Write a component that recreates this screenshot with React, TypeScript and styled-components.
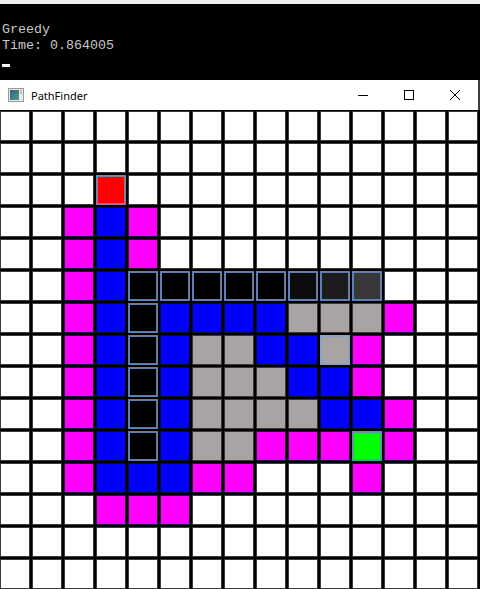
import React from "react";
import styled, { createGlobalStyle } from "styled-components";

const Global = createGlobalStyle`
  html, body { margin: 0; padding: 0; background: #000; overflow: hidden; }
  #root { width: 480px; height: 589px; }
`;

const Page = styled.div`
  width: 480px;
  height: 589px;
  display: flex;
  flex-direction: column;
  overflow: hidden;
  background: #000;
`;

const TopStrip = styled.div`
  height: 4px;
  background: #f0f0f0;
  flex: none;
`;

const Console = styled.div`
  height: 76px;
  flex: none;
  background: #000;
  padding: 18px 0 0 2px;
  box-sizing: border-box;
  font-family: "Liberation Mono", "DejaVu Sans Mono", monospace;
  font-size: 13.33px;
  line-height: 16px;
  color: #c8c8c8;
`;

const Line = styled.div`
  white-space: pre;
  height: 16px;
`;

const Cursor = styled.div`
  width: 8px;
  height: 3px;
  background: #f2f2f2;
  margin-top: 10px;
`;

const TitleBar = styled.div`
  height: 30px;
  flex: none;
  background: #ffffff;
  display: flex;
  align-items: center;
  box-sizing: border-box;
  padding-left: 8px;
  border-right: 2px solid #3c3c3c;
`;

const Title = styled.span`
  font-family: "Noto Sans", "Open Sans", sans-serif;
  font-size: 11px;
  color: #000;
  margin-left: 7px;
  flex: 1;
`;

const CaptionButton = styled.div`
  width: 46px;
  height: 30px;
  display: flex;
  align-items: center;
  justify-content: center;
`;

const GridArea = styled.div`
  flex: 1;
  background: #000;
  overflow: hidden;
  padding-top: 1px;
`;

const Grid = styled.div`
  display: grid;
  grid-template-columns: repeat(15, 30px);
  grid-auto-rows: 30px;
  gap: 2px;
`;

const Cell = styled.div<{ $bg: string; $border: string; $thick: boolean }>`
  box-sizing: border-box;
  width: 30px;
  height: 30px;
  background: ${(p) => p.$bg};
  border: ${(p) => (p.$thick ? 2 : 1)}px solid ${(p) => p.$border};
`;

type Kind = "." | "R" | "G" | "M" | "B" | "Y" | "L" | "P" | "1" | "2" | "3";

const rows: string[] = [
  "...............",
  "...............",
  "...R...........",
  "..MBM..........",
  "..MBM..........",
  "..MBPPPPP123...",
  "..MBPBBBBYYYM..",
  "..MBPBYYBBLM...",
  "..MBPBYYYBBM...",
  "..MBPBYYYYBBM..",
  "..MBPBYYMMMGM..",
  "..MBBBMM...M...",
  "...MMM.........",
  "...............",
  "...............",
];

const pathBorder = "#5f7fb0";

const styles: Record<Kind, { bg: string; border: string; thick: boolean }> = {
  ".": { bg: "#ffffff", border: "#3a3a3a", thick: false },
  R: { bg: "#ff0000", border: "#8c7aa0", thick: true },
  G: { bg: "#00ff00", border: "#5a9a9a", thick: true },
  M: { bg: "#ff00ff", border: "#2a102a", thick: false },
  B: { bg: "#0000ff", border: "#0a0a3a", thick: false },
  Y: { bg: "#aaa3a3", border: "#3a3838", thick: false },
  L: { bg: "#aaa3a3", border: "#8aa2c8", thick: true },
  P: { bg: "#000000", border: pathBorder, thick: true },
  "1": { bg: "#0c0c0c", border: pathBorder, thick: true },
  "2": { bg: "#1c1c1c", border: pathBorder, thick: true },
  "3": { bg: "#383838", border: pathBorder, thick: true },
};

const AppIcon = () => (
  <svg width="16" height="14" viewBox="0 0 16 14">
    <defs>
      <linearGradient id="ig" x1="0" y1="0" x2="1" y2="1">
        <stop offset="0" stopColor="#2e5f8a" />
        <stop offset="1" stopColor="#4fa07a" />
      </linearGradient>
    </defs>
    <rect x="0.5" y="0.5" width="15" height="13" fill="#e8e8e8" stroke="#9a9a9a" />
    <rect x="2" y="2" width="9" height="10" fill="url(#ig)" />
    <rect x="12" y="2" width="2" height="4" fill="#b8c4cc" />
  </svg>
);

export default function App() {
  return (
    <Page>
      <Global />
      <TopStrip />
      <Console>
        <Line>Greedy</Line>
        <Line>Time: 0.864005</Line>
        <Cursor />
      </Console>
      <TitleBar>
        <AppIcon />
        <Title>PathFinder</Title>
        <CaptionButton>
          <svg width="10" height="10" viewBox="0 0 10 10">
            <line x1="0" y1="5.5" x2="10" y2="5.5" stroke="#000" strokeWidth="1" />
          </svg>
        </CaptionButton>
        <CaptionButton>
          <svg width="10" height="10" viewBox="0 0 10 10">
            <rect x="0.5" y="0.5" width="9" height="9" fill="none" stroke="#000" strokeWidth="1" />
          </svg>
        </CaptionButton>
        <CaptionButton>
          <svg width="10" height="10" viewBox="0 0 10 10">
            <path d="M0 0 L10 10 M10 0 L0 10" stroke="#000" strokeWidth="1" />
          </svg>
        </CaptionButton>
      </TitleBar>
      <GridArea>
        <Grid>
          {rows.flatMap((row, r) =>
            row.split("").map((ch, c) => {
              const s = styles[ch as Kind];
              return (
                <Cell key={`${r}-${c}`} $bg={s.bg} $border={s.border} $thick={s.thick} />
              );
            })
          )}
        </Grid>
      </GridArea>
    </Page>
  );
}
